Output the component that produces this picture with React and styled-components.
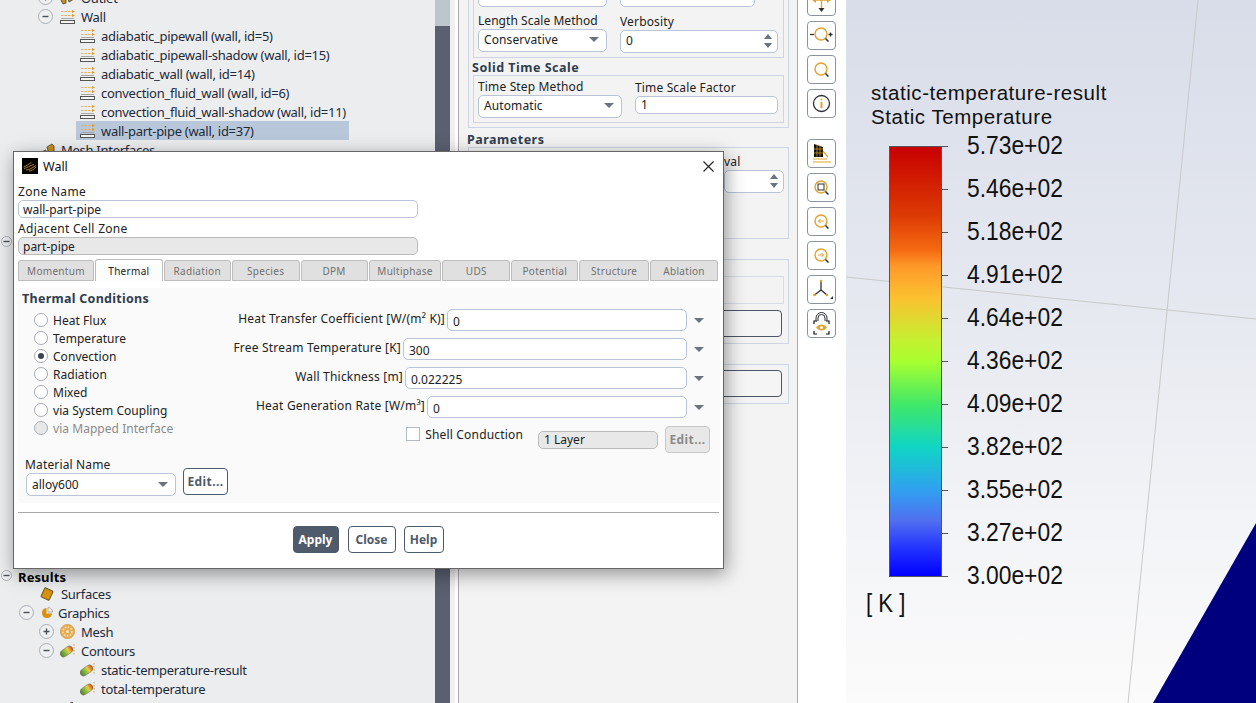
import React from "react";
import styled, { createGlobalStyle } from "styled-components";

const GlobalStyle = createGlobalStyle`
  html, body { margin: 0; padding: 0; background: #fff; }
  * { box-sizing: border-box; }
`;

const uiFont = `"Noto Sans", "Liberation Sans", sans-serif`;

const Page = styled.div`
  position: relative;
  display: flex;
  width: 1256px;
  height: 703px;
  overflow: hidden;
  font-family: ${uiFont};
`;

/* ---------- outline tree ---------- */
const TreePane = styled.div`
  width: 435px;
  height: 703px;
  overflow: hidden;
  background: #ecedef;
  color: #1d2a3a;
  font-size: 13px;
  letter-spacing: -0.28px;
`;
const TreeInner = styled.div`
  margin-top: -12px;
`;
const Row = styled.div`
  display: flex;
  align-items: center;
  height: ${(p) => p.$h || 19}px;
  white-space: nowrap;
  padding-left: ${(p) => p.$indent}px;
  margin-top: ${(p) => p.$above || 0}px;
`;
const LeafBox = styled.div`
  display: flex;
  align-items: center;
  width: 273px;
  height: 19px;
  padding-left: 4px;
  background: ${(p) => (p.$selected ? "#b8c7d9" : "transparent")};
`;
const Toggle = styled.span`
  display: inline-flex;
  align-items: center;
  justify-content: center;
  flex: none;
  width: ${(p) => (p.$small ? 11 : 15)}px;
  height: ${(p) => (p.$small ? 11 : 15)}px;
  border-radius: 50%;
  border: 1px solid #aab0b8;
  background: #eef0f2;
  margin-right: ${(p) => p.$after}px;
`;
const Label = styled.span`
  margin-left: ${(p) => p.$gap}px;
  font-weight: ${(p) => (p.$bold ? 700 : 400)};
  color: ${(p) => (p.$bold ? "#000" : "inherit")};
  padding-top: ${(p) => (p.$bold ? 2 : 0)}px;
  letter-spacing: ${(p) => (p.$bold ? "0.1px" : "inherit")};
`;
const Scrollbar = styled.div`
  width: 15px;
  height: 703px;
  background: #5b6070;
  &::before {
    content: "";
    display: block;
    height: 26px;
    background: #bdc5cd;
  }
`;
const Gutter = styled.div`
  width: 8px;
  height: 703px;
  background: linear-gradient(90deg, #f0f0f0 0 5px, #fff 5px);
`;

/* ---------- task page ---------- */
const TaskPane = styled.div`
  width: 340px;
  height: 703px;
  overflow: hidden;
  background: #f3f3f3;
  border-left: 1px solid #aaa;
  border-right: 1px solid #aaa;
  padding: 0 8px 0 9px;
  color: #222;
  font-size: 12px;
`;
const Box = styled.div`
  border: 1px solid #cdd5e3;
  padding: ${(p) => p.$pad || "4px"};
  margin-top: ${(p) => p.$above || 0}px;
  height: ${(p) => (p.$h ? `${p.$h}px` : "auto")};
`;
const BoxTitle = styled.div`
  font-size: 12.5px;
  font-weight: 700;
  line-height: 14px;
  color: #2f3d4f;
  letter-spacing: 0.5px;
  padding-top: ${(p) => p.$top}px;
  margin-left: ${(p) => p.$left}px;
`;
const FieldRow = styled.div`
  display: flex;
  margin-top: ${(p) => p.$above || 0}px;
  gap: ${(p) => p.$gap || 0}px;
  justify-content: ${(p) => (p.$end ? "flex-end" : "flex-start")};
`;
const Field = styled.div`
  width: ${(p) => p.$w}px;
  padding-top: ${(p) => p.$drop || 0}px;
`;
const Caption = styled.div`
  line-height: 14px;
  margin-bottom: 1px;
  white-space: nowrap;
  letter-spacing: ${(p) => p.$spacing || "0.15px"};
`;
const Control = styled.div`
  display: flex;
  align-items: center;
  justify-content: space-between;
  height: ${(p) => p.$h || 23}px;
  padding: 0 7px 2px 5px;
  background: #fff;
  border: 1px solid #b9c4d6;
  border-radius: 5px;
  font-size: 12px;
  white-space: nowrap;
  letter-spacing: 0.1px;
  color: #222;
`;
const Caret = styled.i`
  display: block;
  flex: none;
  width: 0;
  height: 0;
  border-left: 5px solid transparent;
  border-right: 5px solid transparent;
  border-top: 5px solid #6b7280;
`;
const Spin = styled.span`
  display: flex;
  flex-direction: column;
  gap: 4px;
  flex: none;
  margin-right: -2px;
`;
const SpinUp = styled.i`
  display: block;
  width: 0;
  height: 0;
  border-left: 4px solid transparent;
  border-right: 4px solid transparent;
  border-bottom: 5px solid #6b7280;
`;
const SpinDown = styled(SpinUp)`
  border-bottom: 0;
  border-top: 5px solid #6b7280;
`;
const Strip = styled.div`
  height: 28px;
  border: 1px solid #d7dce6;
`;
const GhostButton = styled.div`
  height: 27px;
  margin: ${(p) => p.$margin};
  background: #f5f5f5;
  border: 1px solid #4c5563;
  border-radius: 4px;
`;

/* ---------- graphics toolbar ---------- */
const Toolbar = styled.div`
  width: 48px;
  height: 703px;
  background: #fff;
  padding: 0 0 0 9px;
  overflow: hidden;
`;
const ToolStack = styled.div`
  display: flex;
  flex-direction: column;
  gap: 5px;
  margin-top: -13px;
`;
const ToolButton = styled.div`
  width: 29px;
  height: 29px;
  flex: none;
  display: flex;
  align-items: center;
  justify-content: center;
  border: 1px solid #8c939c;
  border-radius: 4px;
  background: #fff;
`;
const Grip = styled.div`
  width: 16px;
  height: 3px;
  margin: 4px 0 4px 6px;
  background-image: radial-gradient(#b5bac2 0.6px, transparent 0.7px);
  background-size: 3px 2px;
`;

/* ---------- viewport & legend ---------- */
const Viewport = styled.div`
  position: relative;
  flex: 1;
  height: 703px;
  background: linear-gradient(180deg, #d9dde9 0%, #e6e9f0 45%, #f3f4f7 75%, #fbfbfb 100%);
  padding: 81px 0 0 25px;
  font-family: "Liberation Sans", Arial, sans-serif;
  color: #111;
`;
const Scene = styled.svg`
  position: absolute;
  left: 0;
  top: 0;
`;
const Legend = styled.div`
  position: relative;
`;
const LegendTitle = styled.div`
  font-size: 20.5px;
  line-height: 24px;
  letter-spacing: 0.55px;
  white-space: nowrap;
`;
const Scale = styled.div`
  display: flex;
  margin: 17px 0 0 18px;
  height: 431px;
`;
const Bar = styled.div`
  width: 53px;
  height: 431px;
  border: 1px solid #555;
  background: linear-gradient(
    180deg,
    #c80000 0%,
    #dc3a04 16%,
    #f56a12 24%,
    #ff9a2a 28%,
    #fcc030 35%,
    #c5f030 45%,
    #a8ff30 50%,
    #40e868 60%,
    #10d5c5 70%,
    #30a0f0 80%,
    #5070f0 87%,
    #2030ff 94%,
    #0000ff 100%
  );
`;
const Ticks = styled.div`
  display: flex;
  flex-direction: column;
  justify-content: space-between;
  width: 6px;
`;
const Tick = styled.i`
  display: block;
  height: 1px;
  background: #555;
`;
const Values = styled.div`
  margin: -22px 0 0 19px;
`;
const Value = styled.div`
  height: 43px;
  line-height: 43px;
  font-size: 25.5px;
  white-space: nowrap;
  transform: scaleX(0.895);
  transform-origin: left center;
`;
const Unit = styled.div`
  font-size: 25px;
  line-height: 30px;
  margin: 11px 0 0 -5px;
  white-space: pre;
  transform: scaleX(0.886);
  transform-origin: left center;
`;

/* ---------- wall dialog ---------- */
const Dialog = styled.div`
  position: absolute;
  left: 13px;
  top: 151px;
  width: 711px;
  height: 418px;
  background: #fff;
  border: 1px solid #666;
  box-shadow: 2px 5px 18px rgba(0, 0, 0, 0.4);
  color: #222;
  font-size: 12px;
  z-index: 5;
`;
const TitleBar = styled.div`
  display: flex;
  align-items: center;
  height: 28px;
  padding-left: 8px;
  font-size: 12.5px;
  color: #111;
`;
const TitleText = styled.span`
  margin-left: 5px;
  flex: 1;
`;
const CloseGlyph = styled.svg`
  margin-right: 9px;
`;
const DialogBody = styled.div`
  padding: 5px 3px 0 4px;
`;
const DialogCaption = styled.div`
  line-height: 14px;
  letter-spacing: 0.3px;
  margin-top: ${(p) => p.$above || 0}px;
`;
const NameInput = styled.div`
  display: flex;
  align-items: center;
  width: 400px;
  height: 18px;
  margin-top: 1px;
  padding-left: 4px;
  border: 1px solid ${(p) => (p.$off ? "#bbb" : "#b9c4d6")};
  border-radius: 5px;
  background: ${(p) => (p.$off ? "#e8e8e8" : "#fff")};
`;
const TabBar = styled.div`
  display: flex;
  align-items: flex-end;
  gap: 1px;
  width: 700px;
  height: 22px;
  margin-top: 4px;
`;
const Tab = styled.div`
  width: ${(p) => p.$w}px;
  height: ${(p) => (p.$active ? 22 : 21)}px;
  display: flex;
  align-items: center;
  justify-content: center;
  font-size: 10px;
  letter-spacing: 0.3px;
  color: ${(p) => (p.$active ? "#222" : "#707070")};
  background: ${(p) => (p.$active ? "#fdfdfd" : "#e0e0e0")};
  border: 1px solid #bdbdbd;
  border-bottom: ${(p) => (p.$active ? "0" : "1px solid #bdbdbd")};
  border-radius: 3px 3px 0 0;
`;
const Panel = styled.div`
  height: 215px;
  margin-top: 7px;
  padding: 4px 4px 0;
  background: #fafafa;
`;
const PanelHead = styled.div`
  font-size: 12.5px;
  font-weight: 700;
  line-height: 14px;
  letter-spacing: 0.28px;
  color: #2f3d4f;
`;
const Upper = styled.div`
  display: flex;
  margin-top: 3px;
`;
const RadioColumn = styled.div`
  width: 190px;
  padding: 2px 0 0 12px;
`;
const RadioRow = styled.div`
  display: flex;
  align-items: center;
  gap: 5px;
  height: 18px;
  white-space: nowrap;
  letter-spacing: 0.04px;
  color: ${(p) => (p.$off ? "#8a8a8a" : "#222")};
`;
const RadioDot = styled.span`
  display: flex;
  align-items: center;
  justify-content: center;
  width: 14px;
  height: 14px;
  border-radius: 50%;
  border: 1px solid #a8adb5;
  background: ${(p) => (p.$off ? "#e8e8e8" : "#fff")};
  &::after {
    content: "";
    width: 6px;
    height: 6px;
    border-radius: 50%;
    background: ${(p) => (p.$on ? "#3d4450" : "transparent")};
  }
`;
const ValueColumn = styled.div`
  flex: 1;
  display: flex;
  flex-direction: column;
  gap: 7px;
  padding-right: 6px;
`;
const ValueRow = styled.div`
  display: flex;
  align-items: center;
  justify-content: flex-end;
  height: 22px;
  padding-right: 6px;
  white-space: nowrap;
  letter-spacing: 0.2px;
`;
const ValueName = styled.span`
  margin: -4px 2px 0 0;
`;
const ValueBox = styled.div`
  width: ${(p) => p.$w}px;
  height: 22px;
  display: flex;
  align-items: center;
  padding: 2px 0 0 5px;
  margin-right: 7px;
  background: #fff;
  border: 1px solid #b9c4d6;
  border-radius: 5px;
  letter-spacing: 0;
`;
const ShellRow = styled.div`
  display: flex;
  align-items: center;
  justify-content: flex-end;
  height: 27px;
  margin-top: 1px;
`;
const CheckBox = styled.span`
  width: 14px;
  height: 14px;
  margin: -12px 5px 0 0;
  background: #fff;
  border: 1px solid #b5bac2;
`;
const ShellText = styled.span`
  margin: -11px 15px 0 0;
  letter-spacing: 0.17px;
`;
const LayerBox = styled.div`
  display: flex;
  align-items: center;
  width: 120px;
  height: 18px;
  margin-right: 7px;
  padding-left: 5px;
  background: #e8e8e8;
  border: 1px solid #bbb;
  border-radius: 5px;
`;
const EditButton = styled.div`
  display: flex;
  align-items: center;
  justify-content: center;
  width: 45px;
  height: 27px;
  font-weight: 700;
  font-size: 12px;
  letter-spacing: 0.4px;
  border-radius: 4px;
  border: 1px solid ${(p) => (p.$off ? "#c8c8c8" : "#4c5a6a")};
  color: ${(p) => (p.$off ? "#8a8a8a" : "#4c5a6a")};
  background: ${(p) => (p.$off ? "#e8e8e8" : "#fff")};
`;
const Lower = styled.div`
  display: flex;
  align-items: flex-end;
  margin: 5px 0 0 3px;
`;
const MaterialField = styled.div`
  width: 158px;
`;
const MaterialSelect = styled(Control)`
  width: 150px;
  margin-left: 1px;
  padding-bottom: 0;
  letter-spacing: 0;
`;
const LowerEdit = styled(EditButton)`
  margin-bottom: 1px;
`;
const Separator = styled.div`
  width: 701px;
  height: 1px;
  margin-top: 9px;
  background: #a8a8a8;
`;
const Actions = styled.div`
  display: flex;
  justify-content: center;
  gap: 8px;
  margin-top: 13px;
  padding-right: 2px;
`;
const ActionButton = styled.div`
  display: flex;
  align-items: center;
  justify-content: center;
  width: ${(p) => p.$w}px;
  height: 27px;
  margin-right: ${(p) => (p.$primary ? 1 : 0)}px;
  font-weight: 700;
  font-size: 12px;
  border-radius: 4px;
  border: 1px solid #4c5a6a;
  color: ${(p) => (p.$primary ? "#fff" : "#4c5a6a")};
  background: ${(p) => (p.$primary ? "#4f5b6b" : "#fff")};
`;

/* ---------- icons ---------- */
const Minus = () => (
  <svg width="7" height="7" viewBox="0 0 7 7">
    <path d="M0.5 3.5h6" stroke="#4a5058" strokeWidth="1.4" />
  </svg>
);
const Plus = () => (
  <svg width="7" height="7" viewBox="0 0 7 7">
    <path d="M0.5 3.5h6M3.5 0.5v6" stroke="#4a5058" strokeWidth="1.4" />
  </svg>
);
const WallIcon = () => (
  <svg width="15" height="14" viewBox="0 0 15 14" style={{ flex: "none" }}>
    <path d="M1 1.5h11" stroke="#e3ad4a" strokeDasharray="2.5 1" strokeWidth="0.9" />
    <path d="M12 0l3 1.500-3 1.500z" fill="#d89a28" />
    <path d="M1 5.500h11" stroke="#e3ad4a" strokeDasharray="2.5 1" strokeWidth="0.9" />
    <path d="M12 4l3 1.500-3 1.500z" fill="#d89a28" />
    <path d="M1 8.500h13" stroke="#a0a098" strokeWidth="0.9" />
    <rect x="0.5" y="10.500" width="14" height="3" fill="#f4f4f4" stroke="#555" />
  </svg>
);
const ContourIcon = ({ id }) => (
  <svg width="15" height="15" viewBox="0 0 15 15" style={{ flex: "none" }}>
    <defs>
      <linearGradient id={id} x1="0" y1="0" x2="1" y2="0">
        <stop offset="0" stopColor="#4f7f38" />
        <stop offset="0.4" stopColor="#8cbc40" />
        <stop offset="0.65" stopColor="#e8d040" />
        <stop offset="1" stopColor="#d8401c" />
      </linearGradient>
    </defs>
    <rect x="-0.5" y="5" width="14" height="7" rx="3.5" fill={`url(#${id})`} stroke="#6a6a5a" strokeWidth="0.5" transform="rotate(-35 6.5 8.5)" />
    <path d="M14 1v1.500M14 4v1.500M14 7v1.500M14 10v1.500" stroke="#d8a040" />
  </svg>
);
const SurfaceIcon = () => (
  <svg width="14" height="14" viewBox="0 0 14 14" style={{ flex: "none" }}>
    <rect x="2.5" y="2" width="9" height="10" rx="1" fill="#d8920c" stroke="#6a5a30" transform="rotate(25 7 7)" />
  </svg>
);
const GraphicsIcon = () => (
  <svg width="12" height="12" viewBox="0 0 12 12" style={{ flex: "none" }}>
    <path d="M5.5 1a5 5 0 1 0 5.500 5.500H5.500z" fill="#d8920c" />
    <path d="M7 0.500a4.500 4.500 0 0 1 4.500 4.500H7z" fill="#f4f0e4" stroke="#98938a" strokeWidth="0.7" />
  </svg>
);
const MeshIcon = () => (
  <svg width="15" height="15" viewBox="0 0 15 15" style={{ flex: "none" }}>
    <circle cx="7.5" cy="7.500" r="7" fill="#e6ad58" stroke="#d8a048" />
    <circle cx="7.5" cy="7.500" r="4.500" fill="none" stroke="#f6e2bc" strokeDasharray="1.500 1.500" strokeWidth="1.500" />
    <circle cx="7.5" cy="7.500" r="1.500" fill="#f6e2bc" />
  </svg>
);
const InterfaceIcon = () => (
  <svg width="15" height="14" viewBox="0 0 15 14" style={{ flex: "none" }}>
    <path d="M1 9l5-2v5l-3 1zM7 4l5-3 2 2v5l-5 3z" fill="#c8901c" stroke="#4a4030" strokeWidth="0.8" />
  </svg>
);
const FluentLogo = () => (
  <svg width="16" height="16" viewBox="0 0 16 16" style={{ flex: "none" }}>
    <rect width="16" height="16" fill="#000" />
    <path d="M1.500 9c3-1 5-3 8-4.500M2 10.500c3-.5 6-3 10-4M4 12c3 0 6-2 10-4.500M7 13c2 0 5-1.500 7-4" fill="none" stroke="#c8941e" strokeWidth="0.9" />
  </svg>
);
const CloseIcon = () => (
  <CloseGlyph width="11" height="11" viewBox="0 0 11 11">
    <path d="M0.500 0.500l10 10M10.500 0.500l-10 10" stroke="#222" strokeWidth="1.100" />
  </CloseGlyph>
);

const gold = "#e0a32e";
const ink = "#2b2f36";
const Lens = ({ children, cx = 12, cy = 12 }) => (
  <>
    <circle cx={cx} cy={cy} r="6" fill="none" stroke={gold} strokeWidth="1.400" />
    <path d={`M${cx + 4.500} ${cy + 4.500}l3 3`} stroke={ink} strokeWidth="1.500" />
    {children}
  </>
);
const Tool = ({ children }) => (
  <ToolButton>
    <svg width="25" height="25" viewBox="0 0 25 25">{children}</svg>
  </ToolButton>
);

const toolsTop = [
  <g key="pan">
    <path d="M12.500 3v16M6 11h13" stroke={gold} strokeWidth="1.400" />
    <path d="M3 11l4-3v6zM22 11l-4-3v6z" fill={gold} />
    <path d="M12.500 23l-3-4h6z" fill={ink} />
  </g>,
  <g key="zoom">
    <path d="M1 11.500h4" stroke={ink} strokeWidth="1.300" />
    <path d="M19.500 11.500h4M21.500 9.500v4" stroke={ink} strokeWidth="1.300" />
    <Lens cx={12} cy={11} />
  </g>,
  <Lens key="fit" />,
  <g key="info">
    <circle cx="12.500" cy="12.500" r="8" fill="none" stroke={ink} strokeWidth="1.300" />
    <circle cx="12.500" cy="8.500" r="1" fill={gold} />
    <path d="M12.500 11v6" stroke={gold} strokeWidth="2" />
  </g>,
];
const toolsBottom = [
  <g key="views">
    <path d="M5 3l9 3v10H5z" fill="#14110a" />
    <path d="M8 3.500v12M11 4.500v11M5 8h9M5 12h9" stroke={gold} strokeWidth="0.700" />
    <path d="M14 10l5 6M4 18h14M4 21h18" stroke={gold} strokeWidth="1.200" fill="none" />
  </g>,
  <Lens key="box">
    <rect x="9" y="9" width="6" height="6" fill="none" stroke={ink} />
  </Lens>,
  <Lens key="prev">
    <path d="M15 12H9.500M11.500 10l-2 2 2 2" fill="none" stroke={gold} />
  </Lens>,
  <Lens key="next">
    <path d="M9 12h5.500M12.500 10l2 2-2 2" fill="none" stroke={gold} />
  </Lens>,
  <g key="axes">
    <path d="M12 4v9M12 13l-6.500 5M12 13l6 5" stroke={ink} strokeWidth="1.300" />
    <circle cx="12" cy="4" r="1.300" fill={gold} />
    <circle cx="5.500" cy="18" r="1.300" fill={gold} />
    <circle cx="18" cy="18" r="1.300" fill={gold} />
    <path d="M24 19v3h-3z" fill={ink} />
  </g>,
  <g key="lock">
    <path d="M7 10V7a5.500 5.500 0 0 1 11 0v3M9 10V7a3.500 3.500 0 0 1 7 0v3" fill="none" stroke={ink} />
    <rect x="4.500" y="10" width="16" height="13" fill="#fff" />
    <path d="M5 13v-3h3M17 10h3v3M20 20v3h-3M8 23H5v-3" fill="none" stroke="#111" strokeWidth="1.200" />
    <path d="M7 16.500c3-4 8-4 11 0c-3 4-8 4-11 0z" fill={gold} />
    <circle cx="12.500" cy="16.500" r="1.500" fill="#fff" />
  </g>,
];

const leaves = [
  "adiabatic_pipewall (wall, id=5)",
  "adiabatic_pipewall-shadow (wall, id=15)",
  "adiabatic_wall (wall, id=14)",
  "convection_fluid_wall (wall, id=6)",
  "convection_fluid_wall-shadow (wall, id=11)",
];
const tabs = [
  ["Momentum", 76],
  ["Thermal", 68, true],
  ["Radiation", 67],
  ["Species", 68],
  ["DPM", 67],
  ["Multiphase", 73],
  ["UDS", 68],
  ["Potential", 67],
  ["Structure", 70],
  ["Ablation", 68],
];
const radios = [
  ["Heat Flux"],
  ["Temperature"],
  ["Convection", true],
  ["Radiation"],
  ["Mixed"],
  ["via System Coupling"],
  ["via Mapped Interface", false, true],
];
const conditions = [
  ["Heat Transfer Coefficient [W/(m² K)]", "0", 240],
  ["Free Stream Temperature [K]", "300", 284],
  ["Wall Thickness [m]", "0.022225", 282],
  ["Heat Generation Rate [W/m³]", "0", 260],
];
const scale = ["5.73e+02", "5.46e+02", "5.18e+02", "4.91e+02", "4.64e+02", "4.36e+02", "4.09e+02", "3.82e+02", "3.55e+02", "3.27e+02", "3.00e+02"];

const Leaf = ({ icon, text, selected }) => (
  <Row $indent={76}>
    <LeafBox $selected={selected}>
      {icon}
      <Label $gap={6}>{text}</Label>
    </LeafBox>
  </Row>
);

const App = () => (
  <Page>
    <GlobalStyle />
    <TreePane>
      <TreeInner>
        <Row $indent={38}>
          <Toggle $after={7}><Plus /></Toggle>
          <InterfaceIcon />
          <Label $gap={6}>Outlet</Label>
        </Row>
        <Row $indent={38}>
          <Toggle $after={7}><Minus /></Toggle>
          <WallIcon />
          <Label $gap={6}>Wall</Label>
        </Row>
        {leaves.map((t) => (
          <Leaf key={t} icon={<WallIcon />} text={t} />
        ))}
        <Leaf icon={<WallIcon />} text="wall-part-pipe (wall, id=37)" selected />
        <Row $indent={40}>
          <InterfaceIcon />
          <Label $gap={6}>Mesh Interfaces</Label>
        </Row>
        <Row $indent={1} $above={73}>
          <Toggle $small $after={6}><Minus /></Toggle>
        </Row>
        <Row $indent={1} $above={316} $h={17}>
          <Toggle $small $after={6}><Minus /></Toggle>
          <Label $gap={0} $bold>Results</Label>
        </Row>
        <Row $indent={40}>
          <SurfaceIcon />
          <Label $gap={7}>Surfaces</Label>
        </Row>
        <Row $indent={19}>
          <Toggle $after={7}><Minus /></Toggle>
          <GraphicsIcon />
          <Label $gap={5}>Graphics</Label>
        </Row>
        <Row $indent={39}>
          <Toggle $after={6}><Plus /></Toggle>
          <MeshIcon />
          <Label $gap={6}>Mesh</Label>
        </Row>
        <Row $indent={39}>
          <Toggle $after={6}><Minus /></Toggle>
          <ContourIcon id="pill-a" />
          <Label $gap={6}>Contours</Label>
        </Row>
        <Leaf icon={<ContourIcon id="pill-b" />} text="static-temperature-result" />
        <Leaf icon={<ContourIcon id="pill-c" />} text="total-temperature" />
        <Row $indent={60}>
          <InterfaceIcon />
        </Row>
      </TreeInner>
    </TreePane>
    <Scrollbar />
    <Gutter />

    <TaskPane>
      <Box $above={-25}>
        <Box>
          <FieldRow $gap={13}>
            <Field $w={129}><Control $h={22} /></Field>
            <Field $w={135}><Control $h={22}>1</Control></Field>
          </FieldRow>
          <FieldRow $above={7} $gap={13}>
            <Field $w={129}>
              <Caption $spacing="0.05px">Length Scale Method</Caption>
              <Control>Conservative<Caret /></Control>
            </Field>
            <Field $w={158} $drop={1}>
              <Caption>Verbosity</Caption>
              <Control>0<Spin><SpinUp /><SpinDown /></Spin></Control>
            </Field>
          </FieldRow>
        </Box>
        <BoxTitle $top={3} $left={-1}>Solid Time Scale</BoxTitle>
        <Box>
          <FieldRow $gap={13}>
            <Field $w={144}>
              <Caption>Time Step Method</Caption>
              <Control>Automatic<Caret /></Control>
            </Field>
            <Field $w={143} $drop={1}>
              <Caption>Time Scale Factor</Caption>
              <Control $h={18}>1</Control>
            </Field>
          </FieldRow>
        </Box>
      </Box>
      <BoxTitle $top={5} $left={-1}>Parameters</BoxTitle>
      <Box $h={92} $pad="7px 4px 4px">
        <FieldRow $end>
          <Field $w={60}>
            <Caption>val</Caption>
            <Control><span /><Spin><SpinUp /><SpinDown /></Spin></Control>
          </Field>
        </FieldRow>
      </Box>
      <Box $above={20} $h={85} $pad="16px 4px 4px">
        <Strip />
        <GhostButton $margin="6px 2px 0 0" />
      </Box>
      <Box $above={20} $h={40} $pad="5px 4px">
        <GhostButton $margin="0 2px 0 0" />
      </Box>
    </TaskPane>

    <Toolbar>
      <ToolStack>
        {toolsTop.map((t) => (
          <Tool key={t.key}>{t}</Tool>
        ))}
        <Grip />
        {toolsBottom.map((t) => (
          <Tool key={t.key}>{t}</Tool>
        ))}
      </ToolStack>
    </Toolbar>

    <Viewport>
      <Scene width="410" height="703" viewBox="0 0 410 703">
        <path d="M0 277L410 319" stroke="#c9c9c9" />
        <path d="M352 0L282 703" stroke="#c9c9c9" />
        <path d="M410 523L307 703H410z" fill="#00007f" />
      </Scene>
      <Legend>
        <LegendTitle>static-temperature-result</LegendTitle>
        <LegendTitle>Static Temperature</LegendTitle>
        <Scale>
          <Bar />
          <Ticks>
            {scale.map((v) => (
              <Tick key={v} />
            ))}
          </Ticks>
          <Values>
            {scale.map((v) => (
              <Value key={v}>{v}</Value>
            ))}
          </Values>
        </Scale>
        <Unit>[ K ]</Unit>
      </Legend>
    </Viewport>

    <Dialog>
      <TitleBar>
        <FluentLogo />
        <TitleText>Wall</TitleText>
        <CloseIcon />
      </TitleBar>
      <DialogBody>
        <DialogCaption>Zone Name</DialogCaption>
        <NameInput>wall-part-pipe</NameInput>
        <DialogCaption $above={4}>Adjacent Cell Zone</DialogCaption>
        <NameInput $off>part-pipe</NameInput>
        <TabBar>
          {tabs.map(([name, w, active]) => (
            <Tab key={name} $w={w} $active={active}>{name}</Tab>
          ))}
        </TabBar>
        <Panel>
          <PanelHead>Thermal Conditions</PanelHead>
          <Upper>
            <RadioColumn>
              {radios.map(([name, on, off]) => (
                <RadioRow key={name} $off={off}>
                  <RadioDot $on={on} $off={off} />
                  {name}
                </RadioRow>
              ))}
            </RadioColumn>
            <ValueColumn>
              {conditions.map(([name, value, w]) => (
                <ValueRow key={name}>
                  <ValueName>{name}</ValueName>
                  <ValueBox $w={w}>{value}</ValueBox>
                  <Caret />
                </ValueRow>
              ))}
              <ShellRow>
                <CheckBox />
                <ShellText>Shell Conduction</ShellText>
                <LayerBox>1 Layer</LayerBox>
                <EditButton $off>Edit...</EditButton>
              </ShellRow>
            </ValueColumn>
          </Upper>
          <Lower>
            <MaterialField>
              <Caption>Material Name</Caption>
              <MaterialSelect>alloy600<Caret /></MaterialSelect>
            </MaterialField>
            <LowerEdit>Edit...</LowerEdit>
          </Lower>
        </Panel>
        <Separator />
        <Actions>
          <ActionButton $w={46} $primary>Apply</ActionButton>
          <ActionButton $w={48}>Close</ActionButton>
          <ActionButton $w={40}>Help</ActionButton>
        </Actions>
      </DialogBody>
    </Dialog>
  </Page>
);

export default App;
